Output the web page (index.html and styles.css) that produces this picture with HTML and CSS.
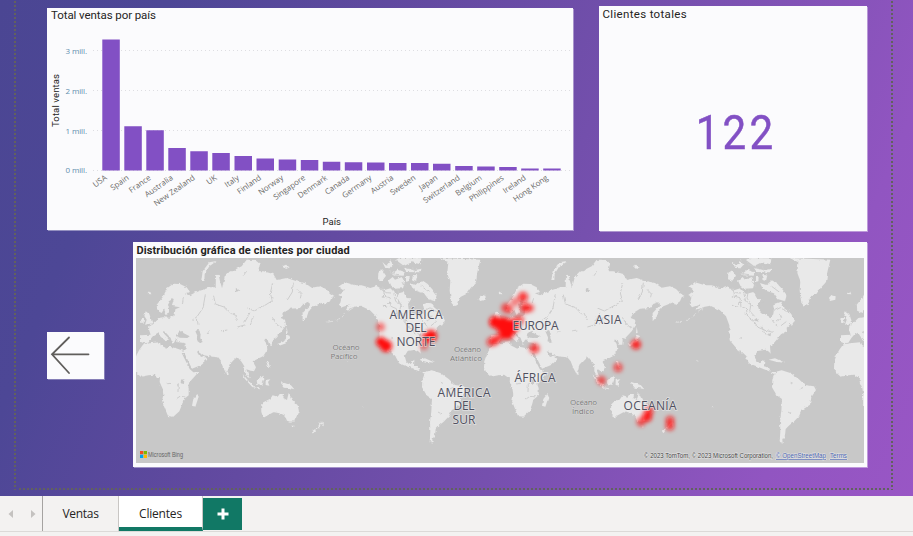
FILE: index.html
```html
<!DOCTYPE html>
<html lang="es">
<head>
<meta charset="utf-8">
<title>Clientes</title>
<link rel="stylesheet" href="styles.css">
</head>
<body>
<main class="report">
  <svg class="guides" width="913" height="496" aria-hidden="true">
    <path d="M15 1V490M19 489H891M892 1V490"/>
  </svg>
  <div class="top-row">
    <section class="panel sales">
      <svg width="526" height="222" viewBox="47 8 526 222">
        <text class="title" x="51" y="19" textLength="105">Total ventas por país</text>
        <path class="gridline" d="M93 50.5H570M93 90.5H570M93 130.5H570M93 170.5H570"/>
        <g class="ticks">
          <text x="65.5" y="54" textLength="21.5">3 mill.</text>
          <text x="65.5" y="93.5" textLength="21.5">2 mill.</text>
          <text x="65.5" y="133.5" textLength="21.5">1 mill.</text>
          <text x="65.5" y="173" textLength="21.5">0 mill.</text>
        </g>
        <text class="axis" transform="translate(59 127) rotate(-90)" textLength="53">Total ventas</text>
        <path class="bars" d="M102.3 39.5h17.5v131h-17.5zM124.3 126.3h17.5v44.2h-17.5zM146.3 130.2h17.5v40.3h-17.5zM168.3 148h17.5v22.5h-17.5zM190.3 151.3h17.5v19.2h-17.5zM212.3 153h17.5v17.5h-17.5zM234.5 156h17.5v14.5h-17.5zM256.5 158.5h17.5v12h-17.5zM278.7 159.5h17.5v11h-17.5zM300.8 160h17.5v10.5h-17.5zM322.8 161.7h17.5v8.8h-17.5zM344.8 162.3h17.5v8.2h-17.5zM367 162.6h17.5v7.9h-17.5zM389 163h17.5v7.5h-17.5zM411 163h17.5v7.5h-17.5zM433 163.7h17.5v6.8h-17.5zM455.2 166.1h17.5v4.4h-17.5zM477.2 166.5h17.5v4h-17.5zM499.2 167.1h17.5v3.4h-17.5zM521.2 168.4h17.5v2.1h-17.5zM543.2 168.6h17.5v1.9h-17.5z"/>
        <g class="countries">
          <text transform="translate(107.5 179) rotate(-35)">USA</text>
          <text transform="translate(129.5 179) rotate(-35)">Spain</text>
          <text transform="translate(151.5 179) rotate(-35)">France</text>
          <text transform="translate(173.5 179) rotate(-35)">Australia</text>
          <text transform="translate(195.5 179) rotate(-35)">New Zealand</text>
          <text transform="translate(217.5 179) rotate(-35)">UK</text>
          <text transform="translate(239.7 179) rotate(-35)">Italy</text>
          <text transform="translate(261.7 179) rotate(-35)">Finland</text>
          <text transform="translate(283.9 179) rotate(-35)">Norway</text>
          <text transform="translate(306 179) rotate(-35)">Singapore</text>
          <text transform="translate(328 179) rotate(-35)">Denmark</text>
          <text transform="translate(350 179) rotate(-35)">Canada</text>
          <text transform="translate(372.2 179) rotate(-35)">Germany</text>
          <text transform="translate(394.2 179) rotate(-35)">Austria</text>
          <text transform="translate(416.2 179) rotate(-35)">Sweden</text>
          <text transform="translate(438.2 179) rotate(-35)">Japan</text>
          <text transform="translate(460.4 179) rotate(-35)">Switzerland</text>
          <text transform="translate(482.4 179) rotate(-35)">Belgium</text>
          <text transform="translate(504.4 179) rotate(-35)">Philippines</text>
          <text transform="translate(526.4 179) rotate(-35)">Ireland</text>
          <text transform="translate(548.6 179) rotate(-35)">Hong Kong</text>
        </g>
        <text class="axis" x="322.5" y="225" textLength="18.5">País</text>
      </svg>
    </section>
    <section class="panel total">
      <h2 class="heading">Clientes totales</h2>
      <div class="value">122</div>
    </section>
  </div>
  <div class="bottom-row">
    <button class="back" aria-label="Atrás">
      <svg width="57" height="47" viewBox="0 0 57 47"><path d="M22 5.500L5 22.300L22 41M5 22.300H41.500"/></svg>
    </button>
    <section class="panel map">
      <h2 class="heading strong">Distribución gráfica de clientes por ciudad</h2>
      <svg class="world" width="728" height="205" viewBox="0 0 728 205">
        <defs>
          <filter id="coast" x="0" y="0" width="728" height="205" filterUnits="userSpaceOnUse">
            <feTurbulence type="fractalNoise" baseFrequency=".28" numOctaves="2" seed="4"/>
            <feDisplacementMap in="SourceGraphic" scale="3.200" xChannelSelector="R" yChannelSelector="G"/>
          </filter>
          <filter id="heat" x="-20%" y="-20%" width="140%" height="140%"><feGaussianBlur stdDeviation="1.900"/></filter>
          <g id="east">
            <path class="land" d="M33 292L33 312 42 316 55 314 64 300 72 291 84 284 92 296 108 310 118 303 101 286 97 279 105 281 122 300 128 318 135 306 145 300 150 297 142 302 142 312 166 316 168 330 160 338 136 330 118 326 112 332 92 322 90 313 60 316 40 319 28 335 20 350 13 370 12 390 20 405 32 416 55 412 72 410 82 417 90 418 89 432 97 450 100 470 96 490 108 520 114 534 130 536 148 520 156 500 160 485 176 472 176 450 172 440 185 425 206 402 190 403 179 393 170 375 155 345 163 345 175 370 186 392 215 380 233 364 222 353 210 357 200 340 208 342 222 352 245 356 262 358 272 370 280 390 288 405 295 395 298 380 312 365 322 357 335 372 343 385 343 400 352 417 359 421 349 394 362 398 372 400 378 388 368 370 378 365 400 354 412 335 410 318 402 305 413 306 418 320 427 320 428 305 436 300 455 280 468 262 465 245 452 240 460 225 480 212 510 210 520 198 538 191 540 202 518 225 518 250 531 235 536 220 550 205 580 193 585 200 600 190 605 178 613 174 600 165 588 153 570 145 545 149 525 135 500 130 470 120 440 126 430 108 400 100 385 100 390 78 375 66 350 65 335 85 320 92 312 100 300 100 285 115 276 150 270 130 266 110 258 112 257 148 240 148 210 158 193 165 180 172 165 166 180 162 170 148 150 138 130 137 112 150 98 178 80 200 82 218 95 225 102 214 110 232 119 220 114 200 125 180 132 184 126 204 150 208 136 214 134 230 120 239 100 238 85 240 70 255 58 264 57 275 62 290Z"/>
            <path class="land" d="M47 220L58 228 67 256 45 260 50 245 43 234ZM32 240L42 240 41 254 30 254ZM214 129L218 100 238 73 260 69 238 85 224 108 223 129ZM202 468L206 476 196 506 186 503 190 483ZM393 500L400 493 421 482 428 472 443 476 449 468 462 468 460 480 471 486 476 465 486 485 503 502 507 520 493 550 481 551 471 548 465 533 454 527 430 523 400 539 394 522ZM484 563L491 563 487 571ZM573 550L576 557 563 570 550 586 546 580 563 568ZM338 408L350 422 373 446 367 447 344 422ZM368 448L389 451 391 454 370 451ZM400 413L403 424 397 441 382 438 380 428ZM407 426L421 424 414 432 418 443 407 441ZM450 431L466 436 483 442 493 454 480 451 464 449ZM409 370L414 369 421 390 414 388ZM470 266L473 284 468 286ZM471 290L480 294 468 316 448 323 442 318 464 310ZM290 401L295 401 296 411 290 409ZM53 168L60 160 64 169ZM459 84L468 80 479 88 468 93Z"/>
            <path class="sea" d="M140 294L147 281 158 279 160 285 179 295 172 300 150 299ZM196 280L207 276 212 286 211 301 218 312 210 315 202 309 204 298ZM153 425L163 424 162 438 152 436ZM318 150L331 158 317 163Z"/>
            <path class="river" d="M250 170L256 198 285 208 306 229M428 136L421 165 427 188 408 200 373 219 352 210M490 134L487 162 472 186M427 238L442 262 460 270M226 169L219 210 201 236 184 249M312 225L323 248M360 224L344 253M273 279L292 276M322 267L348 260M231 288L241 276M371 235L360 260M145 436L144 462M138 483L150 475 166 477M501 154L514 168 511 181M340 112L350 100M202 240L204 260M160 180L157 198M110 438L120 436"/>
          </g>
          <g id="west">
            <path class="land" d="M55 146L75 133 105 142 125 142 151 150 170 144 192 157 211 151 228 168 250 162 260 180 275 181 264 198 266 215 285 228 298 236 303 222 311 212 310 199 331 191 342 208 356 219 371 239 375 249 363 257 350 269 351 279 333 289 320 305 311 316 300 326 302 347 297 341 287 335 263 339 254 354 259 371 270 376 283 365 282 384 293 387 300 402 315 402 335 397 361 405 387 424 405 441 432 445 438 456 424 478 420 500 395 517 387 535 371 551 358 562 347 573 345 592 337 604 338 617 329 613 331 580 330 552 334 520 336 483 320 472 306 448 307 425 314 407 294 398 267 388 237 376 226 354 206 335 209 347 197 328 179 307 178 262 168 235 149 216 121 203 101 207 76 217 91 199 66 208 59 198 65 176 55 171 72 158Z"/>
            <path class="land" d="M359 60L385 73 382 105 391 129 389 158 394 194 403 205 413 201 421 177 439 168 452 150 468 132 472 103 481 65ZM476 181L484 171 497 175 496 185 480 189ZM296 365L315 361 345 374 321 372ZM175 104L187 97 198 113 187 128 174 124ZM204 128L218 117 225 125 246 117 254 134 249 151 223 152 211 143ZM270 135L289 141 306 127 322 137 337 154 350 171 345 190 325 184 312 166 292 160 277 149ZM211 100L220 105 232 95 254 103 251 113 219 112ZM256 90L282 97 305 92 299 103 258 102ZM187 72L199 83 211 67 220 81 211 91 196 90ZM228 66L252 84 275 73 302 79 304 61 249 60 236 61ZM258 114L266 114 265 130 258 131ZM278 111L292 112 288 128 277 125ZM360 245L371 255 365 265Z"/>
            <path class="sea" d="M268 195L282 188 298 196 312 211 310 229 302 238 289 230 272 222ZM184 177L193 172 190 180ZM201 197L210 190 212 197ZM222 224L234 226 225 230ZM251 247L260 240 266 251ZM291 290L305 284 301 295ZM210 300L215 296 215 303ZM188 200L203 207 191 207Z"/>
            <path class="river" d="M188 149L195 175 210 179 213 205 229 212 233 236 250 247 264 268 284 276 308 283M180 152L199 164 213 165M236 154L231 180 243 200 239 219 254 235M220 160L227 190 251 205M313 218L331 209 350 221M320 250L335 238 331 230M333 263L350 250M304 244L321 265M362 433L369 436M354 522L363 527M389 453L401 448M246 130L257 146M211 106L237 110M277 87L291 113M232 78L266 92M305 145L329 163M276 266L285 290"/>
            <path class="islands" d="M20 253L36 250M48 248L60 241M66 237L77 229M85 219L100 209M79 367L85 370M128 506L132 506M7 551L8 564"/>
          </g>
        </defs>
        <rect class="ocean" width="728" height="205"/>
        <g filter="url(#coast)">
          <use href="#east" transform="translate(-6 -20) scale(.33333)"/>
          <use href="#west" transform="translate(184 -20) scale(.33333)"/>
          <use href="#east" transform="translate(344 -20) scale(.33333)"/>
          <use href="#west" transform="translate(534 -20) scale(.33333)"/>
          <use href="#west" transform="translate(-166 -20) scale(.33333)"/>
          <use href="#east" transform="translate(694 -20) scale(.33333)"/>
        </g>
        <g class="hot" filter="url(#heat)">
          <circle cx="244.500" cy="69" r="4.500" opacity=".5"/><circle cx="245" cy="84" r="5"/><circle cx="250" cy="88" r="6"/>
          <circle cx="295" cy="78" r="6"/><circle cx="291" cy="80" r="5"/><circle cx="288" cy="88" r="4" opacity=".45"/>
          <circle cx="359" cy="64" r="6"/><circle cx="367" cy="67" r="8"/><circle cx="371" cy="74" r="7.500"/><circle cx="376" cy="68" r="7"/><circle cx="383" cy="62" r="5" opacity=".65"/><circle cx="359" cy="82.500" r="4.500" opacity=".8"/><circle cx="355" cy="84" r="4.500" opacity=".65"/><circle cx="364" cy="79" r="4" opacity=".7"/>
          <circle cx="370" cy="50" r="5" opacity=".6"/><circle cx="374" cy="52" r="4" opacity=".4"/><circle cx="379" cy="44" r="4.500" opacity=".45"/><circle cx="387" cy="39" r="5" opacity=".8"/><circle cx="389" cy="50" r="5" opacity=".8"/><circle cx="394" cy="50" r="4" opacity=".6"/>
          <circle cx="398.500" cy="90.500" r="5" opacity=".75"/><circle cx="500" cy="86.500" r="5" opacity=".85"/><circle cx="482" cy="109.500" r="4.500" opacity=".65"/><circle cx="465.500" cy="122.500" r="4.500" opacity=".6"/>
          <circle cx="513" cy="153" r="4.500" opacity=".75"/><circle cx="511" cy="159" r="5" opacity=".9"/><circle cx="505" cy="164" r="4.500" opacity=".6"/><circle cx="534" cy="162.500" r="4.500" opacity=".7"/><circle cx="534" cy="168" r="4.500" opacity=".7"/>
        </g>
        <g class="continent">
          <text x="280" y="61" textLength="53">AMÉRICA</text><text x="280" y="74" textLength="21">DEL</text><text x="280" y="88" textLength="39">NORTE</text>
          <text x="328" y="139" textLength="53">AMÉRICA</text><text x="328" y="152" textLength="21">DEL</text><text x="328" y="165.500" textLength="23">SUR</text>
          <text x="399.500" y="72" textLength="46">EUROPA</text><text x="472.500" y="65.500" textLength="26">ASIA</text><text x="399" y="124" textLength="41">ÁFRICA</text><text x="514" y="152" textLength="53">OCEANÍA</text>
        </g>
        <g class="oceans">
          <text x="210" y="92" textLength="27">Océano</text><text x="208" y="101" textLength="27">Pacífico</text>
          <text x="331.500" y="94" textLength="27">Océano</text><text x="330" y="103" textLength="32">Atlántico</text>
          <text x="447.500" y="147" textLength="27">Océano</text><text x="447" y="155.500" textLength="22">Índico</text>
        </g>
        <path fill="#f25022" d="M4 193h3.300v3.300H4z"/><path fill="#7fba00" d="M7.700 193H11v3.300H7.700z"/><path fill="#00a4ef" d="M4 196.700h3.300v3.300H4z"/><path fill="#ffb900" d="M7.700 196.700H11v3.300H7.700z"/>
        <text class="bing" x="12" y="198.500" textLength="35" lengthAdjust="spacingAndGlyphs">Microsoft Bing</text>
        <g class="credits">
          <text x="508" y="200" textLength="129" lengthAdjust="spacingAndGlyphs">© 2023 TomTom, © 2023 Microsoft Corporation,</text>
          <a href="#osm"><text x="640" y="200" textLength="50" lengthAdjust="spacingAndGlyphs">© OpenStreetMap</text></a>
          <a href="#terms"><text x="694" y="200" textLength="17" lengthAdjust="spacingAndGlyphs">Terms</text></a>
        </g>
      </svg>
    </section>
  </div>
</main>
<nav class="tabs">
  <div class="arrows">
    <svg width="42" height="35" viewBox="0 0 42 35"><path d="M13 14v8l-4.500-4zM31 14v8l4.500-4z"/></svg>
  </div>
  <a class="tab">Ventas</a>
  <a class="tab active">Clientes</a>
  <button class="add" aria-label="Nueva página"><svg width="12" height="12" viewBox="0 0 12 12"><path d="M6 .5v11M.5 6h11"/></svg></button>
</nav>
</body>
</html>
```
FILE: styles.css
```css
* { box-sizing: border-box; }
body { margin: 0; width: 913px; height: 536px; overflow: hidden; background: #f3f2f1; font-family: "Open Sans", "Noto Sans", sans-serif; }
button { border: 0; padding: 0; }
.report { position: relative; height: 496px; padding: 6px 46px 0 47px; background: linear-gradient(112deg, #4b4693 0%, #4d4796 15%, #60499f 35%, #7650ae 61%, #9155c1 86%, #9956c5 100%); }
.guides { position: absolute; left: 0; top: 0; pointer-events: none; }
.guides path { fill: none; stroke: #62615f; stroke-width: 2; stroke-dasharray: 2 2; }
.top-row { display: flex; gap: 26px; height: 225px; }
.panel { background: #fbfbfd; box-shadow: 1px 1px 0 rgba(255, 255, 255, .4); }
.sales { width: 526px; height: 222px; margin-top: 2px; }
.total { width: 268px; height: 225px; }
svg { display: block; }
.title, .heading { font: 400 11.5px Roboto, sans-serif; fill: #252423; color: #252423; }
.heading { margin: 0; padding: 2px 3.5px; height: 16px; line-height: 13px; letter-spacing: .33px; white-space: nowrap; }
.heading.strong { font-size: 11px; font-weight: 700; letter-spacing: .11px; }
.value { margin: 79px 0 0 6px; text-align: center; font: 400 49px/64px Roboto, sans-serif; letter-spacing: 3.7px; transform: scaleX(.86); color: #8250c4; -webkit-text-stroke: .5px #8250c4; }
.gridline { stroke: #dedee2; stroke-dasharray: 1 3; }
.ticks { font-size: 8px; fill: #5f8fae; }
.axis { font: 9.5px Roboto, sans-serif; fill: #252423; }
.bars { fill: #8250c4; }
.countries { font-size: 7.9px; fill: #6c6b6a; text-anchor: end; }
.bottom-row { display: flex; align-items: flex-start; gap: 29px; margin-top: 11px; }
.back { width: 57px; height: 47px; margin-top: 90px; background: #fbfbfd; box-shadow: 1px 1px 0 rgba(255, 255, 255, .3); }
.back path { fill: none; stroke: #605e5c; stroke-width: 1.8; stroke-linecap: round; }
.map { width: 734px; height: 225px; }
.world { margin-left: 3px; }
.ocean, .sea { fill: #c8c8c8; }
.land { fill: #e9e9e9; }
.river { fill: none; stroke: #cdcdcd; stroke-width: 3; }
.islands { fill: none; stroke: #dedede; stroke-width: 3; }
.hot { fill: #ff0a0a; }
.continent text, .oceans text { text-anchor: middle; paint-order: stroke; stroke: rgba(240, 240, 240, .6); stroke-width: 1.5px; }
.continent { font-size: 12px; fill: #50505f; }
.oceans text { font-size: 8px; fill: #777; stroke-width: .6px; }
.bing { font: 6.5px "Liberation Sans", sans-serif; fill: #666; }
.credits { font: 6.6px "Liberation Sans", sans-serif; fill: #444; paint-order: stroke; stroke: rgba(240, 240, 240, .7); stroke-width: 1px; }
.credits a { fill: #4b64b0; text-decoration: underline; }
.tabs { display: flex; height: 36px; border-bottom: 1px solid #dcdad8; }
.arrows { width: 43px; border-right: 1px solid #a5a3a1; }
.arrows path { fill: #c4c2c0; }
.tab { width: 76px; height: 35px; font-size: 12px; line-height: 35px; text-align: center; color: #252423; border-right: 1px solid #c8c6c4; letter-spacing: -.3px; }
.tab.active { width: 84px; background: #fff; border-bottom: 4px solid #117865; letter-spacing: -.2px; }
.add { width: 39px; height: 32px; margin-top: 2px; background: #117865; display: flex; align-items: center; justify-content: center; }
.add path { stroke: #fff; stroke-width: 3; }
```
